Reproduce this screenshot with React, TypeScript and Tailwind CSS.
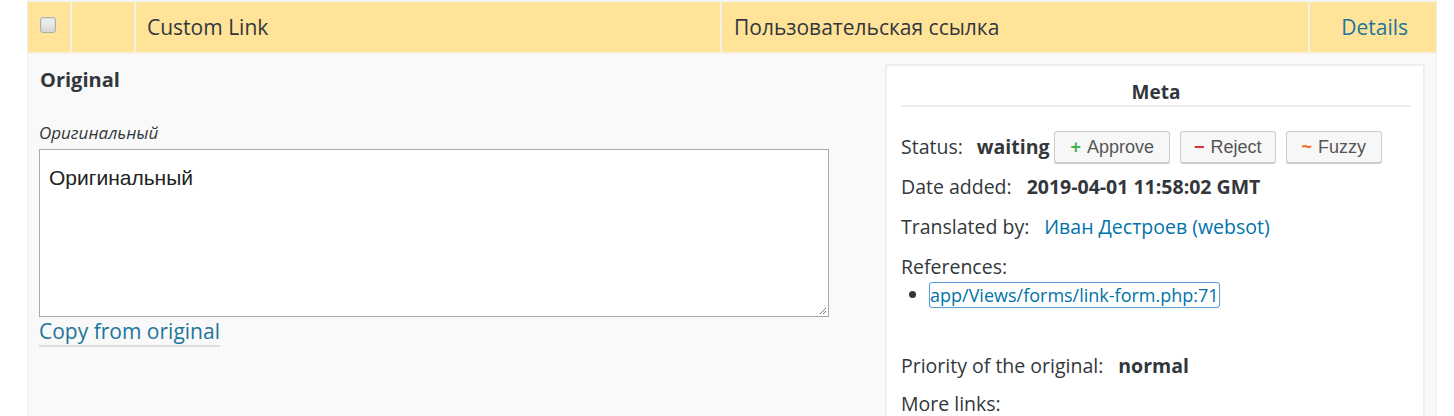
import React from "react";

const sans = { fontFamily: '"Open Sans", "Liberation Sans", sans-serif' };

function MetaRow({ label, children, className = "" }: { label: string; children: React.ReactNode; className?: string }) {
  return (
    <div className={`flex items-center gap-[15px] leading-6 ${className}`}>
      <span>{label}</span>
      {children}
    </div>
  );
}

function ActionButton({ sign, signClass, label, pad = "px-[15px]" }: { sign: string; signClass: string; label: string; pad?: string }) {
  return (
    <button
      type="button"
      className={`h-8 ${pad} rounded-[3px] border border-[#ccc] bg-[#f7f7f7] shadow-[0_1px_0_#ccc] text-[18px] text-[#555] leading-none flex items-center gap-[6px] font-['Liberation_Sans',Arial,sans-serif]`}
    >
      <span className={`font-bold ${signClass}`}>{sign}</span>
      {label}
    </button>
  );
}

export default function App() {
  return (
    <div className="w-[1454px] h-[416px] bg-white pl-[27px] pr-[17px] overflow-hidden text-[#32373c]" style={sans}>
      <div className="border-x border-t-2 border-[#eeeeee] border-t-[#f3f3f3] h-full flex flex-col">
        {/* Header row */}
        <div className="flex h-[53px] bg-[#f6f1e2] gap-[2px] pb-[2px] text-[21px]">
          <div className="w-[42px] bg-[#ffe399] flex items-start pt-[15px] pl-[12px]">
            <div className="w-4 h-4 rounded-[3px] border border-[#a8aeb3] bg-gradient-to-b from-[#f2f2f2] to-[#d8d8d8] shadow-[inset_0_1px_2px_rgba(0,0,0,0.1)]" />
          </div>
          <div className="w-[62px] bg-[#ffe399]" />
          <div className="w-[584px] bg-[#ffe399] flex items-center pl-[11px] pt-[1px]">Custom Link</div>
          <div className="w-[586px] bg-[#ffe399] flex items-center pl-[12px] pt-[1px]">Пользовательская ссылка</div>
          <div className="flex-1 bg-[#ffe399] flex items-center justify-end pr-[28px] pt-[1px]">
            <a href="#" className="text-[#21759b]">Details</a>
          </div>
        </div>

        {/* Body */}
        <div className="flex-1 bg-[#f9f9f9] flex justify-between pl-[11px] pr-[11px] pt-[10px]">
          <div className="w-[790px] pt-[3px]">
            <h3 className="text-[20px] font-bold leading-[26px] pl-[1px]">Original</h3>
            <div className="mt-[30px] text-[17px] italic leading-5 text-[#32373c]">Оригинальный</div>
            <div className="mt-[6px] h-[168px] bg-white border border-[#a9a9a9] relative px-[9px] pt-[16px] text-[21px] leading-6 font-['Liberation_Sans',Arial,sans-serif] text-[#222]">
              Оригинальный
              <svg className="absolute right-[1px] bottom-[1px]" width="9" height="9" viewBox="0 0 9 9">
                <path d="M8 2 L2 8 M8 5 L5 8" stroke="#777" strokeWidth="1" />
              </svg>
            </div>
            <a href="#" className="inline-block mt-[1px] text-[21px] leading-[27px] text-[#21759b] border-b-2 border-[#ddd]">
              Copy from original
            </a>
          </div>

          <div className="w-[540px] bg-white border-2 border-[#eeeeee] border-b-0 pl-[14px] pr-[12px] text-[19.5px]">
            <h3 className="text-center text-[19px] font-bold leading-6 pt-[14px] pb-[1px] border-b-2 border-[#eeeeee]">Meta</h3>
            <MetaRow label="Status:" className="mt-[24px] h-8 !gap-[14px]">
              <span className="font-bold">waiting</span>
              <div className="flex gap-[10px] -ml-[9px]">
                <ActionButton sign="+" signClass="text-[#46b450]" label="Approve" />
                <ActionButton sign="−" signClass="text-[#dc3232]" label="Reject" pad="px-[13px]" />
                <ActionButton sign="~" signClass="text-[#f56e28]" label="Fuzzy" />
              </div>
            </MetaRow>
            <MetaRow label="Date added:" className="mt-[12px]">
              <span className="font-bold">2019-04-01 11:58:02 GMT</span>
            </MetaRow>
            <MetaRow label="Translated by:" className="mt-[16px]">
              <a href="#" className="text-[#0073aa]">Иван Дестроев (websot)</a>
            </MetaRow>
            <div className="mt-[16px] leading-6">References:</div>
            <ul className="mt-[4px] pl-[29px] list-disc leading-6">
              <li>
                <a href="#" className="text-[18px] text-[#0073aa] outline outline-1 outline-[#5b9dd9] rounded-[2px] shadow-[0_0_2px_rgba(30,140,190,0.6)]">
                  app/Views/forms/link-form.php:71
                </a>
              </li>
            </ul>
            <MetaRow label="Priority of the original:" className="mt-[47px]">
              <span className="font-bold">normal</span>
            </MetaRow>
            <div className="mt-[14px] leading-6">More links:</div>
          </div>
        </div>
      </div>
    </div>
  );
}
